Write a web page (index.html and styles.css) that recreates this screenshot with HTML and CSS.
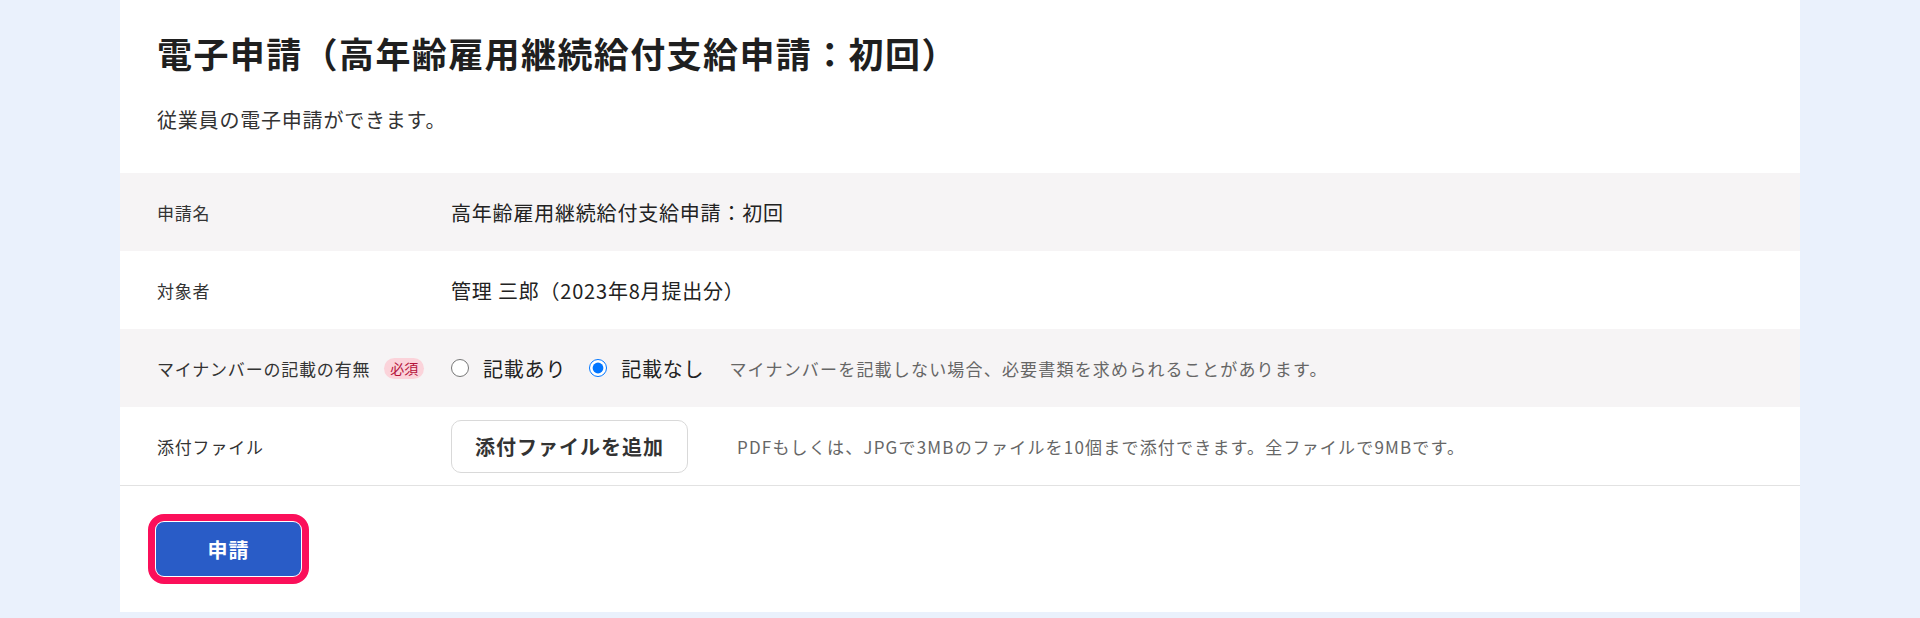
FILE: index.html
```html
<!DOCTYPE html>
<html lang="ja">
<head>
<meta charset="utf-8">
<title>電子申請</title>
<link rel="stylesheet" href="styles.css">
</head>
<body>
<div class="card">
  <h1 class="title">電子申請（高年齢雇用継続給付支給申請：初回）</h1>
  <p class="lead">従業員の電子申請ができます。</p>

  <div class="rows">
    <div class="row">
      <div class="label">申請名</div>
      <div class="value">高年齢雇用継続給付支給申請：初回</div>
    </div>
    <div class="row">
      <div class="label">対象者</div>
      <div class="value">管理 三郎（2023年8月提出分）</div>
    </div>
    <div class="row">
      <div class="label">マイナンバーの記載の有無<span class="required">必須</span></div>
      <div class="value">
        <label class="radio"><input type="radio" name="mynumber" value="yes">記載あり</label>
        <label class="radio"><input type="radio" name="mynumber" value="no" checked>記載なし</label>
        <span class="note note-radio">マイナンバーを記載しない場合、必要書類を求められることがあります。</span>
      </div>
    </div>
    <div class="row last">
      <div class="label">添付ファイル</div>
      <div class="value">
        <button type="button" class="file-btn">添付ファイルを追加</button>
        <span class="note note-file">PDFもしくは、JPGで3MBのファイルを10個まで添付できます。全ファイルで9MBです。</span>
      </div>
    </div>
  </div>

  <div class="footer">
    <button type="submit" class="submit">申請</button>
  </div>
</div>
</body>
</html>
```

FILE: styles.css
```css
body {
    margin: 0;
    background-color: #eaf1fc;
    font-family: "Noto Sans CJK JP", "Noto Sans", sans-serif;
    color: #222222;
    letter-spacing: 0.05em;
}

.card {
    margin: 0 120px 6px;
    padding-top: 27px;
    background-color: #ffffff;
}

.title {
    margin: 0;
    padding-left: 37px;
    font-size: 35px;
    line-height: 51px;
    font-weight: 700;
    letter-spacing: 0.04em;
    color: #1f1f1f;
}

.lead {
    margin: 27px 0 0;
    padding-left: 37px;
    font-size: 20px;
    line-height: 30px;
    color: #333333;
}

.rows {
    margin-top: 38px;
}

.row {
    display: flex;
    align-items: center;
    height: 78px;
}

.row:nth-child(odd) {
    background-color: #f6f4f5;
}

.row.last {
    border-bottom: 1px solid #e2e2e2;
}

.label {
    display: flex;
    align-items: center;
    width: 294px;
    padding-left: 37px;
    font-size: 17px;
    color: #333333;
}

.required {
    margin-left: 14px;
    padding: 0 6px;
    height: 21px;
    line-height: 21px;
    border-radius: 11px;
    background-color: #fbd3da;
    color: #b5123a;
    font-size: 14px;
    letter-spacing: 0;
}

.value {
    display: flex;
    align-items: center;
    font-size: 20px;
    color: #222222;
}

.radio {
    display: flex;
    align-items: center;
    margin-right: 23px;
    font-size: 20px;
    cursor: pointer;
}

.radio input {
    width: 18px;
    height: 18px;
    margin: 0 14px 0 0;
    accent-color: #0075ff;
}

.note {
    font-size: 17px;
    letter-spacing: 0.07em;
    color: #666666;
}

.note-radio {
    margin-left: 2px;
}

.note-file {
    margin-left: 49px;
}

.file-btn {
    height: 53px;
    padding: 0 23px;
    border: 1px solid #d9d9d9;
    border-radius: 10px;
    background-color: #ffffff;
    font-family: inherit;
    font-size: 20px;
    font-weight: 700;
    letter-spacing: 0.05em;
    color: #333333;
    cursor: pointer;
}

.footer {
    padding: 36px 36px 36px;
}

.submit {
    width: 145px;
    height: 54px;
    border: none;
    border-radius: 8px;
    background-color: #295cc7;
    color: #ffffff;
    font-family: inherit;
    font-size: 20px;
    font-weight: 700;
    letter-spacing: 0.05em;
    outline: 7px solid #fb0f5a;
    outline-offset: 1px;
    cursor: pointer;
}
```
